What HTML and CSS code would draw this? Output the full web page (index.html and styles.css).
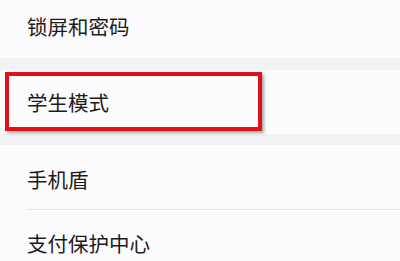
FILE: index.html
```html
<!DOCTYPE html>
<html lang="zh">
<head>
<meta charset="utf-8">
<link rel="stylesheet" href="styles.css">
</head>
<body>
<div class="page">
  <section class="group">
    <div class="row row-first">锁屏和密码</div>
  </section>
  <div class="gap"></div>
  <section class="group">
    <div class="row row-mid">学生模式</div>
    <div class="highlight"></div>
  </section>
  <div class="gap gap-b"></div>
  <section class="group">
    <div class="row row-a">手机盾</div>
    <div class="divider"></div>
    <div class="row row-b">支付保护中心</div>
  </section>
</div>
</body>
</html>
```
FILE: styles.css
```css
html, body {
  margin: 0;
  padding: 0;
  background: #fcfbfd;
}
.page {
  width: 400px;
  height: 261px;
  overflow: hidden;
  font-family: "Noto Sans CJK SC", "Noto Sans", sans-serif;
  color: #1c1c1c;
  font-size: 20.5px;
}
.group {
  position: relative;
  background: #fcfbfd;
}
.row {
  display: flex;
  align-items: center;
  padding-left: 27px;
  box-sizing: border-box;
  line-height: 1;
}
.row-first {
  height: 58px;
  padding-bottom: 6px;
}
.gap {
  height: 12px;
  background: #f2f2f4;
}
.gap-b {
  height: 11px;
}
.row-mid {
  height: 64px;
}
.row-a {
  height: 64px;
  padding-top: 4px;
}
.divider {
  height: 1px;
  margin-left: 26px;
  background: #e6e6e8;
}
.row-b {
  height: 66px;
}
.highlight {
  position: absolute;
  left: 5px;
  top: 2px;
  width: 257px;
  height: 59px;
  box-sizing: border-box;
  border: 4px solid #df1218;
  box-shadow: 2px 2px 3px rgba(0, 0, 0, 0.35);
}
```
